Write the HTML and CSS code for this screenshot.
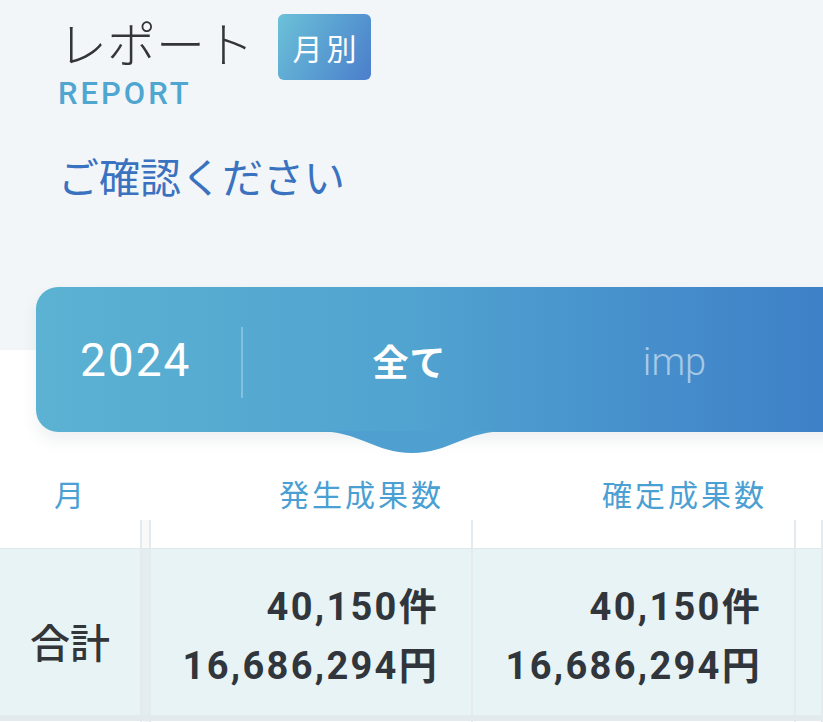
FILE: index.html
```html
<!DOCTYPE html>
<html lang="ja">
<head>
<meta charset="utf-8">
<title>レポート</title>
<link rel="stylesheet" href="styles.css">
</head>
<body>
<div class="page">
  <header class="head">
    <div class="title-row">
      <div class="title-block">
        <h1 class="title">レポート</h1>
        <div class="subtitle">REPORT</div>
      </div>
      <span class="badge">月別</span>
    </div>
    <p class="lead">ご確認ください</p>
  </header>

  <nav class="tabbar">
    <div class="year">2024</div>
    <div class="divider"></div>
    <div class="tab active">
      <span>全て</span>
      <svg class="notch" viewBox="0 0 190 23" width="190" height="23" aria-hidden="true">
        <path d="M0 0 C 42 0, 58 22, 95 22 C 132 22, 148 0, 190 0 Z" fill="#4f9fd0"/>
      </svg>
    </div>
    <div class="tab inactive">imp</div>
  </nav>

  <div class="table">
    <div class="th th-month">月</div>
    <div class="th th-num">発生成果数</div>
    <div class="th th-num">確定成果数</div>
    <div class="th"></div>

    <div class="td spacer c1"></div>
    <div class="td spacer c2"></div>
    <div class="td spacer c3"></div>
    <div class="td spacer c4"></div>

    <div class="td row c1 label">合計</div>
    <div class="td row c2 num"><div>40,150件</div><div>16,686,294円</div></div>
    <div class="td row c3 num"><div>40,150件</div><div>16,686,294円</div></div>
    <div class="td row c4"></div>

    <div class="td next c1"></div>
    <div class="td next c2"></div>
    <div class="td next c3"></div>
    <div class="td next c4"></div>
  </div>
</div>
</body>
</html>
```

FILE: styles.css
```css
html, body {
  margin: 0;
  padding: 0;
  background: #ffffff;
}

.page {
  width: 823px;
  min-height: 722px;
  overflow: hidden;
  background: linear-gradient(#f2f6f8 0, #f2f6f8 350px, #ffffff 350px);
  font-family: "Noto Sans CJK JP", "Noto Sans", sans-serif;
}

.head {
  padding: 18px 0 0 58px;
}

.title-row {
  display: flex;
  align-items: flex-start;
  gap: 24px;
}

.title {
  margin: 0;
  font-size: 49px;
  line-height: 48px;
  font-weight: 300;
  color: #333537;
  font-family: "Noto Sans CJK JP", sans-serif;
}

.subtitle {
  margin-top: 12px;
  font-family: Roboto, "Noto Sans", sans-serif;
  font-weight: 500;
  font-size: 31px;
  line-height: 31px;
  letter-spacing: 3px;
  color: #4ea6d1;
}

.badge {
  margin-top: -4px;
  width: 93px;
  height: 66px;
  border-radius: 6px;
  background: linear-gradient(120deg, #6cc1d8 0%, #5aa0d2 50%, #4b7ecb 100%);
  color: #ffffff;
  font-size: 30px;
  letter-spacing: 4px;
  display: flex;
  align-items: center;
  justify-content: center;
  padding-left: 4px;
  box-sizing: border-box;
}

.lead {
  margin: 46px 0 0 0;
  font-size: 41px;
  line-height: 40px;
  color: #3b72c0;
  font-weight: 400;
}

.tabbar {
  position: relative;
  z-index: 2;
  margin: 92px 0 0 36px;
  width: 830px;
  height: 145px;
  border-radius: 22px 0 0 22px;
  background: linear-gradient(90deg, #5bb2d2 0%, #51a3d0 45%, #4690cc 72%, #3d7dc6 100%);
  box-shadow: 0 8px 16px rgba(40, 60, 80, 0.08);
  display: flex;
  align-items: center;
}

.year {
  width: 205px;
  box-sizing: border-box;
  padding-left: 44px;
  font-family: Roboto, "Noto Sans", sans-serif;
  font-weight: 400;
  font-size: 46px;
  letter-spacing: 2px;
  color: #ffffff;
}

.divider {
  width: 2px;
  height: 71px;
  margin-top: 6px;
  background: rgba(255, 255, 255, 0.28);
}

.tab {
  width: 265px;
  align-self: stretch;
  display: flex;
  align-items: center;
  justify-content: center;
}

.tab.active {
  position: relative;
  margin-left: 34px;
  font-size: 36px;
  font-weight: 700;
  letter-spacing: 1px;
  color: #ffffff;
  padding-top: 1px;
  box-sizing: border-box;
}

.notch {
  position: absolute;
  left: 40px;
  top: 144px;
  display: block;
}

.tab.inactive {
  font-family: Roboto, sans-serif;
  font-weight: 300;
  font-size: 38px;
  color: rgba(255, 255, 255, 0.55);
  padding-top: 4px;
  box-sizing: border-box;
}

.table {
  display: grid;
  grid-template-columns: 142px 331px 323px 1fr;
}

.th {
  height: 88px;
  box-sizing: border-box;
  padding-top: 44px;
  line-height: 34px;
  font-size: 30px;
  color: #4a9fd3;
  background: #ffffff;
}

.th-month {
  text-align: center;
  padding-right: 4px;
}

.th-num {
  text-align: right;
  padding-right: 29px;
  letter-spacing: 3px;
}

.td {
  box-sizing: border-box;
  border-right: 2px solid #e4eaed;
}

.td.c2 {
  background-image: linear-gradient(90deg, rgba(0, 0, 0, 0.025) 0, rgba(0, 0, 0, 0.025) 7px, #e4eaed 7px, #e4eaed 9px, transparent 9px);
}

.spacer {
  height: 28px;
  background-color: #ffffff;
}

.row {
  height: 167px;
  background-color: #e8f3f6;
  border-top: 1px solid #dde9ed;
}

.label {
  text-align: center;
  padding-top: 72px;
  font-size: 40px;
  line-height: 40px;
  font-weight: 500;
  color: #333639;
}

.num {
  text-align: right;
  padding: 29px 32px 0 0;
  font-family: Roboto, "Noto Sans CJK JP", sans-serif;
  font-weight: 700;
  font-size: 38px;
  line-height: 59px;
  letter-spacing: 2.3px;
  color: #30363b;
}

.next {
  height: 40px;
  background-color: #ffffff;
  border-top: 6px solid #e2eaed;
}
```
